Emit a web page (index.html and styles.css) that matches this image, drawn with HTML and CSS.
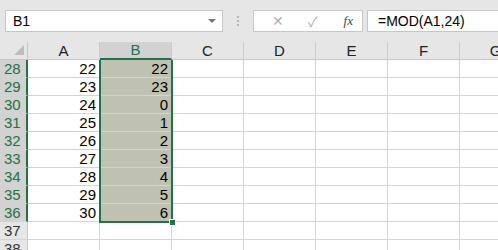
FILE: index.html
```html
<!DOCTYPE html>
<html lang="ja">
<head>
  <meta charset="UTF-8" />
  <meta name="viewport" content="width=device-width, initial-scale=1.0" />
  <title>MOD</title>
  <link rel="stylesheet" href="styles.css">
</head>
<body>
  <!-- Formula bar -->
  <div class="formula-bar">
    <div class="name-box">
      <span>B1</span>
      <span class="drop-arrow"></span>
    </div>
    <div class="grip"><i></i><i></i><i></i></div>
    <div class="fx-box">
      <span class="fx-btn cancel">&#x2715;</span>
      <span class="fx-btn enter">&#x2713;</span>
      <span class="fx-btn fx">fx</span>
    </div>
    <div class="formula-input">=MOD(A1,24)</div>
  </div>

  <!-- Sheet -->
  <div class="sheet">
    <div class="corner"><span class="corner-tri"></span></div>
    <div class="col-head">A</div>
    <div class="col-head sel">B</div>
    <div class="col-head">C</div>
    <div class="col-head">D</div>
    <div class="col-head">E</div>
    <div class="col-head">F</div>
    <div class="col-head">G</div>

    <div class="row-head sel">28</div><div class="cell">22</div><div class="cell hl">22</div><div class="cell"></div><div class="cell"></div><div class="cell"></div><div class="cell"></div><div class="cell"></div>
    <div class="row-head sel">29</div><div class="cell">23</div><div class="cell hl">23</div><div class="cell"></div><div class="cell"></div><div class="cell"></div><div class="cell"></div><div class="cell"></div>
    <div class="row-head sel">30</div><div class="cell">24</div><div class="cell hl">0</div><div class="cell"></div><div class="cell"></div><div class="cell"></div><div class="cell"></div><div class="cell"></div>
    <div class="row-head sel">31</div><div class="cell">25</div><div class="cell hl">1</div><div class="cell"></div><div class="cell"></div><div class="cell"></div><div class="cell"></div><div class="cell"></div>
    <div class="row-head sel">32</div><div class="cell">26</div><div class="cell hl">2</div><div class="cell"></div><div class="cell"></div><div class="cell"></div><div class="cell"></div><div class="cell"></div>
    <div class="row-head sel">33</div><div class="cell">27</div><div class="cell hl">3</div><div class="cell"></div><div class="cell"></div><div class="cell"></div><div class="cell"></div><div class="cell"></div>
    <div class="row-head sel">34</div><div class="cell">28</div><div class="cell hl">4</div><div class="cell"></div><div class="cell"></div><div class="cell"></div><div class="cell"></div><div class="cell"></div>
    <div class="row-head sel">35</div><div class="cell">29</div><div class="cell hl">5</div><div class="cell"></div><div class="cell"></div><div class="cell"></div><div class="cell"></div><div class="cell"></div>
    <div class="row-head sel">36</div><div class="cell">30</div><div class="cell hl">6</div><div class="cell"></div><div class="cell"></div><div class="cell"></div><div class="cell"></div><div class="cell"></div>
    <div class="row-head">37</div><div class="cell"></div><div class="cell"></div><div class="cell"></div><div class="cell"></div><div class="cell"></div><div class="cell"></div><div class="cell"></div>
    <div class="row-head">38</div><div class="cell"></div><div class="cell"></div><div class="cell"></div><div class="cell"></div><div class="cell"></div><div class="cell"></div><div class="cell"></div>

    <!-- selection outline over B column -->
    <div class="selection"></div>
    <div class="fill-handle"></div>
  </div>
</body>
</html>
```

FILE: styles.css
```css
body {
  margin: 0;
  width: 498px;
  height: 250px;
  overflow: hidden;
  background-color: #fff;
  font-family: "Liberation Sans", Arial, "Noto Sans CJK JP", sans-serif;
  font-size: 15px;
  color: #000;
}

/* Formula bar */
.formula-bar {
  height: 42px;
  box-sizing: border-box;
  padding-top: 10px;
  background-color: #e6e6e6;
  display: flex;
  align-items: flex-start;
}

.name-box {
  margin-left: 5px;
  width: 218px;
  height: 22px;
  box-sizing: border-box;
  background-color: #fff;
  border: 1px solid #c6c6c6;
  display: flex;
  align-items: center;
  justify-content: space-between;
  padding: 0 6px 0 7px;
  font-size: 14px;
}

.drop-arrow {
  width: 0;
  height: 0;
  border-left: 4px solid transparent;
  border-right: 4px solid transparent;
  border-top: 4px solid #777;
}

.grip {
  width: 30px;
  height: 22px;
  display: flex;
  flex-direction: column;
  align-items: center;
  justify-content: center;
  gap: 2px;
}

.grip i {
  width: 2px;
  height: 2px;
  background-color: #b4b4b4;
}

.fx-box {
  width: 110px;
  height: 22px;
  box-sizing: border-box;
  background-color: #fff;
  border: 1px solid #c6c6c6;
  display: flex;
  align-items: center;
  padding-left: 18px;
  gap: 24px;
}

.fx-btn {
  color: #b0b0b0;
  font-size: 14px;
}

.fx-btn.fx {
  margin-left: 2px;
  color: #444;
  font-family: "Liberation Serif", serif;
  font-style: italic;
  font-size: 13px;
}

.formula-input {
  margin-left: 4px;
  flex: 1;
  height: 22px;
  box-sizing: border-box;
  background-color: #fff;
  border: 1px solid #c6c6c6;
  border-right: none;
  padding-left: 10px;
  display: flex;
  align-items: center;
  font-size: 14px;
}

/* Sheet grid */
.sheet {
  position: relative;
  display: grid;
  grid-template-columns: 28px repeat(7, 72px);
  grid-auto-rows: 18px;
}

.corner,
.col-head,
.row-head,
.cell {
  box-sizing: border-box;
  display: flex;
  align-items: flex-end;
  line-height: 17px;
}

.corner {
  background-color: #e6e6e6;
  border-right: 1px solid #c8c8c8;
  border-bottom: 1px solid #c8c8c8;
  justify-content: flex-end;
  padding: 0 3px 4px 0;
}

.corner-tri {
  width: 10px;
  height: 10px;
  background-color: #bdbdbd;
  clip-path: polygon(100% 0, 100% 100%, 0 100%);
}

.col-head {
  background-color: #e6e6e6;
  border-right: 1px solid #cbcbcb;
  border-bottom: 1px solid #c8c8c8;
  justify-content: center;
  color: #222;
}

.col-head.sel {
  background-color: #d2d2d2;
  color: #217346;
  border-bottom: 2px solid #217346;
}

.row-head {
  background-color: #e6e6e6;
  border-right: 1px solid #c8c8c8;
  border-bottom: 1px solid #d4d4d4;
  padding-left: 4px;
  color: #333;
}

.row-head.sel {
  background-color: #d2d2d2;
  color: #217346;
  border-right: 2px solid #217346;
}

.cell {
  border-right: 1px solid #d4d4d4;
  border-bottom: 1px solid #d4d4d4;
  justify-content: flex-end;
  padding-right: 3px;
}

.cell.hl {
  background-color: #bfc1b2;
}

/* Selection outline */
.selection {
  position: absolute;
  left: 99px;
  top: 18px;
  width: 74px;
  height: 163px;
  box-sizing: border-box;
  border: 2px solid #217346;
  border-top: none;
  pointer-events: none;
}

.fill-handle {
  position: absolute;
  left: 169px;
  top: 177px;
  width: 7px;
  height: 7px;
  box-sizing: border-box;
  background-color: #217346;
  border: 1px solid #fff;
}
```
